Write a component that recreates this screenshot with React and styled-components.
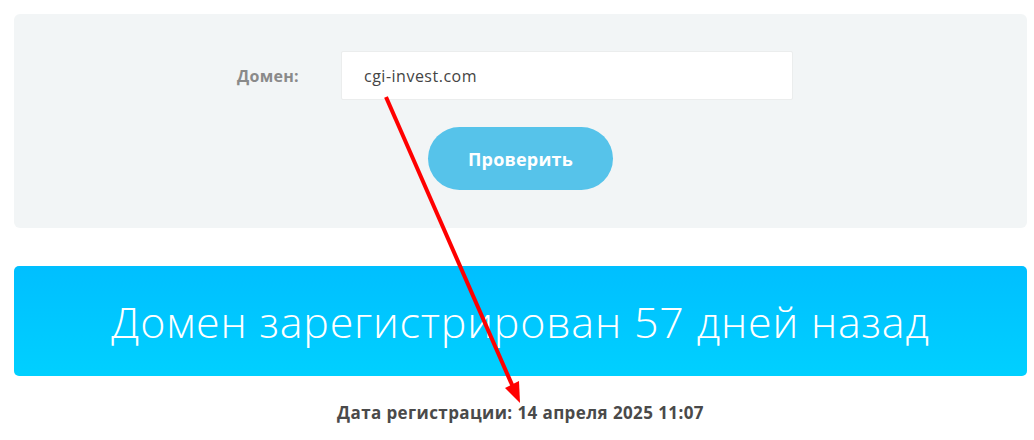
import React from "react";
import styled, { createGlobalStyle } from "styled-components";

const GlobalStyle = createGlobalStyle`
  body {
    margin: 0;
    background: #fff;
    font-family: "Open Sans", "Liberation Sans", sans-serif;
  }
`;

const Page = styled.div`
  position: relative;
  padding: 14px 7px 0 14px;
  height: 440px;
  box-sizing: border-box;
`;

const CheckForm = styled.form`
  background: #f2f5f6;
  border-radius: 6px;
  padding: 37px 0 38px;
  display: flex;
  flex-direction: column;
  align-items: center;
  gap: 27px;
`;

const FieldRow = styled.div`
  width: 100%;
  display: grid;
  grid-template-columns: 285px 452px;
  column-gap: 42px;
  align-items: center;
`;

const Label = styled.label`
  text-align: right;
  color: #8a8a8a;
  font-size: 16px;
  font-weight: 700;
  letter-spacing: 0.3px;
`;

const Input = styled.input`
  box-sizing: border-box;
  height: 49px;
  width: 100%;
  border: 1px solid #ebeded;
  border-radius: 2px;
  background: #fff;
  padding: 0 22px;
  font-family: "Open Sans", "Liberation Sans", sans-serif;
  font-size: 16px;
  letter-spacing: 0.5px;
  color: #444;
  outline: none;
`;

const Button = styled.button`
  width: 185px;
  height: 63px;
  border: none;
  border-radius: 32px;
  background: #56c3ea;
  color: #fff;
  font-family: "Open Sans", "Liberation Sans", sans-serif;
  font-size: 18px;
  font-weight: 700;
  letter-spacing: 0.2px;
  cursor: pointer;
`;

const Banner = styled.div`
  margin-top: 38px;
  height: 110px;
  border-radius: 5px;
  background: linear-gradient(to bottom, #00bfff, #00d0ff);
  color: #fff;
  display: flex;
  align-items: center;
  justify-content: center;
  font-size: 43px;
  font-weight: 300;
  letter-spacing: 0.8px;
`;

const Info = styled.p`
  margin: 26px 0 0;
  text-align: center;
  color: #4a4a4a;
  font-size: 17px;
  font-weight: 700;
  letter-spacing: 0.4px;
  line-height: 22px;
`;

const Arrow = styled.svg`
  position: absolute;
  left: 0;
  top: 0;
  width: 1034px;
  height: 440px;
  pointer-events: none;
`;

const App = () => (
  <>
    <GlobalStyle />
    <Page>
      <CheckForm onSubmit={(e) => e.preventDefault()}>
        <FieldRow>
          <Label htmlFor="domain">Домен:</Label>
          <Input id="domain" name="domain" defaultValue="cgi-invest.com" />
        </FieldRow>
        <Button type="submit">Проверить</Button>
      </CheckForm>
      <Banner>Домен зарегистрирован 57 дней назад</Banner>
      <Info>Дата регистрации: 14 апреля 2025 11:07</Info>
      <Arrow viewBox="0 0 1034 440">
        <line x1="386" y1="97" x2="513" y2="387" stroke="#f00" strokeWidth="4" />
        <polygon points="520,403 505,388 519,381" fill="#f00" />
      </Arrow>
    </Page>
  </>
);

export default App;
